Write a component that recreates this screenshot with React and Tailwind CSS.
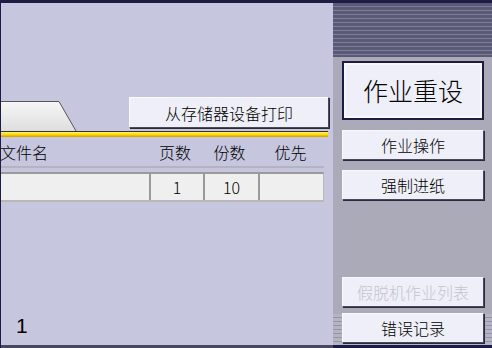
import React from "react";

const font = { fontFamily: '"Noto Sans CJK SC", "Noto Sans", sans-serif' };

function SideButton({ children, disabled }) {
  return (
    <div className="h-[30px] w-[142px] border border-t-[#f8f8ff] border-l-[#f8f8ff] border-r-[#4a4a5a] border-b-[#4a4a5a] bg-[#efeff9] shadow-[1px_1px_0_#2a2a3a] flex items-center justify-center">
      <span className={`text-[16px] leading-none ${disabled ? "text-[#c4c4d0]" : "text-black"}`}>
        {children}
      </span>
    </div>
  );
}

function App() {
  return (
    <div style={font} className="w-[492px] h-[348px] flex flex-col bg-[#1c1c44] overflow-hidden font-light">
      <div className="h-[3px] shrink-0" />
      <div className="flex flex-1 min-h-0">
        {/* left work area */}
        <div className="w-[332px] ml-[1px] bg-[#c6c6de] flex flex-col border-b-[3px] border-[#484860]">
          <div className="h-[94px]" />
          <div className="flex items-end h-[34px]">
            <svg width="78" height="34" viewBox="0 0 78 34" className="block">
              <defs>
                <linearGradient id="tab" x1="0" y1="0" x2="0" y2="1">
                  <stop offset="0" stopColor="#f6f6f6" />
                  <stop offset="1" stopColor="#dedede" />
                </linearGradient>
              </defs>
              <path d="M0 4.5 H58 L75 34 H0 Z" fill="url(#tab)" />
              <path d="M0 4.5 H58 L75 34" fill="none" stroke="#555" strokeWidth="1" />
            </svg>
            <div className="ml-[50px] mb-[3px] w-[200px] h-[31px] border border-t-[#f8f8ff] border-l-[#f8f8ff] border-r-[#4a4a5a] border-b-[#4a4a5a] bg-[#efeff9] shadow-[1px_1px_0_#2a2a3a] flex items-center justify-center">
              <span className="text-[16px] leading-none">从存储器设备打印</span>
            </div>
          </div>
          <div className="w-[327px] h-[6px] border-t border-[#333] bg-[linear-gradient(#fff27a,#ffd800_50%,#d49a00)]" />
          <div className="w-[323px] h-[29px] flex items-center text-[16px] leading-none">
            <span className="w-[148px] -ml-[1px]">文件名</span>
            <span className="w-[54px] text-center">页数</span>
            <span className="w-[55px] text-center">份数</span>
            <span className="flex-1 text-center">优先</span>
          </div>
          <div className="w-[323px] h-[2px] bg-[#b4b4be]" />
          <div className="h-[4px]" />
          <div className="w-[323px] h-[30px] bg-[#efefef] border-t-[2px] border-[#9a9a9a] border-b-[2px] border-b-[#b8b8b8] border-r border-r-[#b8b8b8] flex text-[16px] leading-none">
            <div className="w-[148px]" />
            <div className="w-[54px] flex items-center justify-center border-l-2 border-[#9a9a9a]">1</div>
            <div className="w-[55px] flex items-center justify-center border-l-2 border-[#9a9a9a]">10</div>
            <div className="flex-1 border-l-2 border-[#9a9a9a]" />
          </div>
          <div className="flex-1" />
          <div className="pl-[15px] pb-[9px] text-[21px] leading-none font-normal" style={{ fontFamily: '"Liberation Sans", sans-serif' }}>
            1
          </div>
        </div>
        {/* right side panel */}
        <div className="flex-1 flex flex-col border-b-[3px] border-[#1c1c44]">
          <div className="h-[54px] bg-[repeating-linear-gradient(#5a5a78_0px,#5a5a78_3px,#7c7c96_3px,#7c7c96_4px)]" />
          <div className="flex-1 bg-[#aaaab8] flex flex-col items-start pl-[9px]">
            <div className="mt-[4px] w-[142px] h-[59px] bg-[#1c1c44] p-[2px]">
              <div className="w-full h-full border-2 border-[#f8f8ff] bg-[#efeff9] flex items-center justify-center">
                <span className="text-[25px] leading-none">作业重设</span>
              </div>
            </div>
            <div className="h-[10px]" />
            <SideButton>作业操作</SideButton>
            <div className="h-[10px]" />
            <SideButton>强制进纸</SideButton>
            <div className="flex-1" />
            <SideButton disabled>假脱机作业列表</SideButton>
            <div className="h-[6px]" />
            <div className="relative z-10">
              <SideButton>错误记录</SideButton>
            </div>
          </div>
          <div className="h-[31px] -mt-[29px] bg-[repeating-linear-gradient(#b4b4c4_0px,#b4b4c4_3px,#9494a6_3px,#9494a6_4px)]" />
        </div>
      </div>
    </div>
  );
}

export default App;
